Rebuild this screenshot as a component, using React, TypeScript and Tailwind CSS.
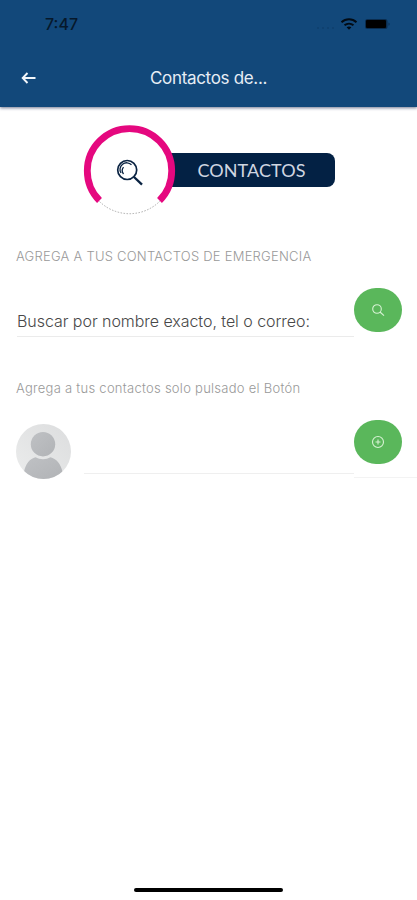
import React from "react";

function StatusBar() {
  return (
    <div className="flex h-12 items-center justify-between pl-[45px] pr-[26px]">
      <span className="font-[Inter] text-[16px] font-medium leading-none text-[#06182b]">7:47</span>
      <svg width="75" height="16" viewBox="0 0 75 16" className="block">
        <path d="M1 12h2M6 12h2M11 12h2M16 12h2" stroke="#0d3a66" strokeWidth="1" />
        <g fill="none" stroke="#020b14" strokeWidth="1.9">
          <path d="M25.5 6.3c4.3-4 10.7-4 15 0" />
          <path d="M28.5 9.3c2.6-2.2 6.4-2.2 9 0" />
        </g>
        <path d="M30.6 11.2c1.4-1.1 3.4-1.1 4.800 0L33 13.800z" fill="#020b14" />
        <rect x="49" y="3" width="22.500" height="10" rx="2.500" fill="#0a2c4e" />
        <rect x="50" y="4" width="20" height="8" rx="1" fill="#000" />
        <path d="M72.500 6.500c1.500.6 1.500 2.600 0 3.200z" fill="#0a2c4e" />
      </svg>
    </div>
  );
}

function Header() {
  return (
    <header className="h-[107px] bg-[#12487a] shadow-[0_1px_3px_rgba(20,30,70,0.6)]">
      <StatusBar />
      <div className="grid h-[59px] grid-cols-[1fr_auto_1fr] items-center">
        <svg width="16" height="14" viewBox="0 0 16 14" className="ml-[21px] block" fill="none" stroke="#f2f6fa" strokeWidth="1.9">
          <path d="M6.500 2L1.700 7L6.500 12M2 7H14.500" />
        </svg>
        <h1 className="font-[Inter] text-[17px] font-normal leading-6 tracking-[-0.320px] text-[#e6edf5]">Contactos de...</h1>
      </div>
    </header>
  );
}

function Banner() {
  return (
    <div className="ml-[83px] mt-[17px] flex h-[92px] items-center">
      <svg width="93" height="92" viewBox="0 0 93 92" className="z-10 block shrink-0" fill="none">
        <circle cx="46.500" cy="46.500" r="43" fill="#fff" />
        <path d="M77.500 76.500A43 43 0 0 1 15.500 76.500" stroke="#aaa" strokeWidth="1" strokeDasharray="1.500 1.500" />
        <path d="M16.500 76.500A42.200 42.200 0 1 1 76.500 76.500" stroke="#e5087f" strokeWidth="6.800" />
        <g stroke="#0a2342">
          <circle cx="44.200" cy="46" r="9.500" strokeWidth="1.700" />
          <path d="M38 49A6.700 6.700 0 0 1 48.500 40.800M40.500 50A5.500 5.500 0 0 1 40.500 43.200" strokeWidth="1.300" />
          <path d="M51 53L59 60.700" strokeWidth="2.300" />
        </g>
      </svg>
      <div className="-ml-[8px] flex h-[34px] w-[167px] items-center justify-center rounded-r-[8px] bg-[#032144]">
        <span className="font-[Lato] text-[18px] leading-none tracking-[0.080px] text-[#d0d6e1]">CONTACTOS</span>
      </div>
    </div>
  );
}

function ActionButton({ label, children }: { label: string; children: React.ReactNode }) {
  return (
    <button aria-label={label} className="flex h-[44px] w-[48px] shrink-0 items-center justify-center rounded-[22px] bg-[#5ab75b]">
      <svg width="14" height="14" viewBox="0 0 14 14" fill="none" stroke="#d7f2d4" strokeWidth="1.100">
        {children}
      </svg>
    </button>
  );
}

function Avatar() {
  return (
    <svg width="55" height="55" viewBox="0 0 55 55" className="block shrink-0">
      <defs>
        <clipPath id="avatar-clip"><circle cx="27.500" cy="27.500" r="27.500" /></clipPath>
        <linearGradient id="avatar-bg" x1="1" y1="0" x2="0" y2="1">
          <stop stopColor="#dcddde" />
          <stop offset="1" stopColor="#ebecec" />
        </linearGradient>
        <linearGradient id="avatar-fg" x1="0" y1="0" x2="1" y2="1">
          <stop stopColor="#bfc1c4" />
          <stop offset="1" stopColor="#b1b3b6" />
        </linearGradient>
      </defs>
      <g clipPath="url(#avatar-clip)">
        <rect width="55" height="55" fill="url(#avatar-bg)" />
        <circle cx="27" cy="20.200" r="12.200" fill="url(#avatar-fg)" />
        <path d="M8 55V48C9.500 40 14 34.500 19.500 33.300C24 35.800 30 35.800 34.500 33.300C40 34.500 45 40 46.500 48V55Z" fill="url(#avatar-fg)" />
      </g>
    </svg>
  );
}

export default function App() {
  return (
    <div className="flex h-[900px] w-full flex-col overflow-hidden bg-white font-[Inter,sans-serif]">
      <Header />
      <main className="flex-1">
        <Banner />
        <p className="ml-4 mt-[30px] h-5 whitespace-nowrap text-[13px] font-light leading-5 tracking-[0.240px] text-[#999]">AGREGA A TUS CONTACTOS DE EMERGENCIA</p>
        <div className="mt-[22px] flex h-[49px] items-start pl-[17px]">
          <div className="flex h-[49px] w-[337px] items-end border-b border-[#ebebeb] pb-[5px]">
            <span className="whitespace-nowrap text-[16px] font-light leading-5 tracking-[-0.050px] text-[#484848]">Buscar por nombre exacto, tel o correo:</span>
          </div>
          <ActionButton label="Buscar">
            <circle cx="6" cy="6" r="4.300" />
            <path d="M9 9L13 12.700" />
          </ActionButton>
        </div>
        <p className="ml-4 mt-[41px] h-5 whitespace-nowrap text-[13px] font-light leading-5 tracking-[0.270px] text-[#999]">Agrega a tus contactos solo pulsado el Botón</p>
        <div className="mt-[22px] flex h-[59px] items-start pl-4">
          <div className="mt-1"><Avatar /></div>
          <div className="ml-[13px] h-[54px] w-[270px] border-b border-[#efefef]" />
          <div className="h-[58px] flex-1 border-b border-[#f3f3f3]">
            <ActionButton label="Agregar contacto">
              <circle cx="7" cy="7" r="5.500" />
              <path d="M7 4.500V9.500M4.500 7H9.500" />
            </ActionButton>
          </div>
        </div>
      </main>
      <footer className="flex h-[12px] justify-center">
        <div className="h-[4px] w-[149px] rounded-full bg-black" />
      </footer>
    </div>
  );
}
